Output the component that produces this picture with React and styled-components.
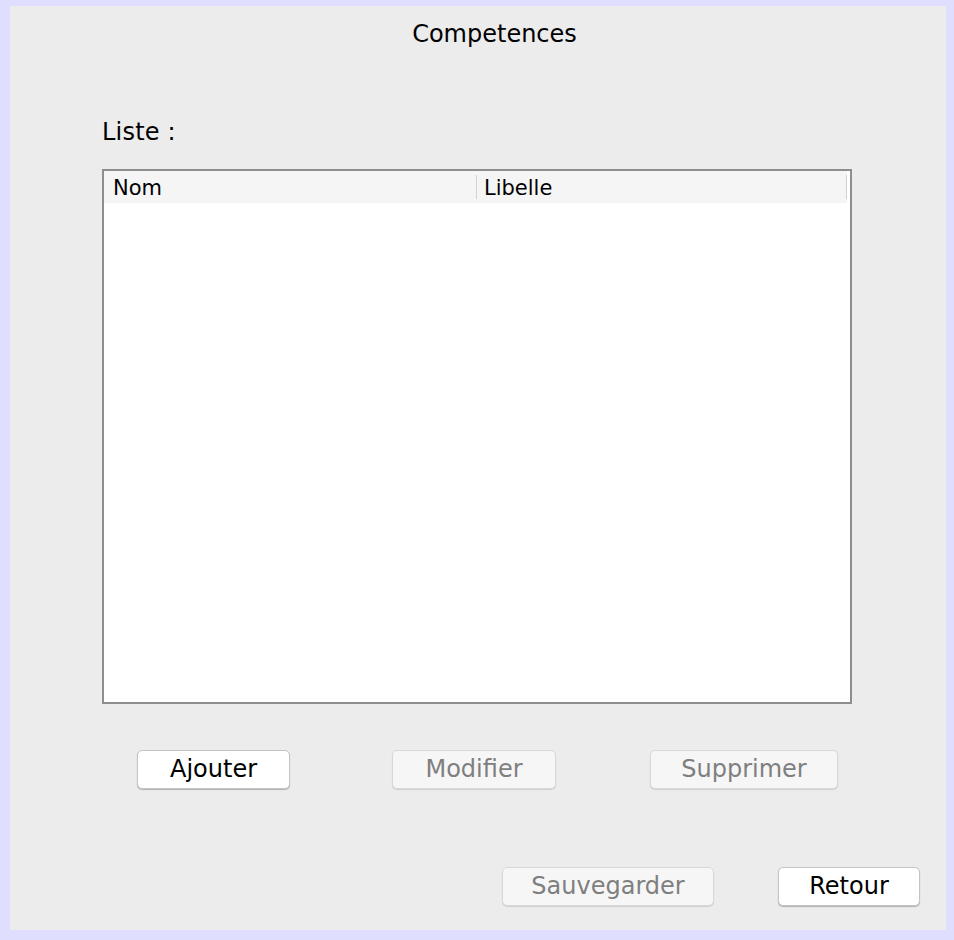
import React from 'react'
import styled, { createGlobalStyle } from 'styled-components'

const GlobalStyle = createGlobalStyle`
  body {
    margin: 0;
    background: #dfdefe;
    font-family: "DejaVu Sans", "Liberation Sans", sans-serif;
  }
`

const Frame = styled.div`
  width: 954px;
  height: 940px;
  box-sizing: border-box;
  padding: 6px 8px 10px 10px;
  background: #dfdefe;
`

const Panel = styled.div`
  height: 100%;
  background: #ececec;
  display: flex;
  flex-direction: column;
  color: #000;
`

const Title = styled.h1`
  margin: 14px 0 0 33px;
  font-size: 24px;
  font-weight: normal;
  line-height: 28px;
  text-align: center;
`

const Content = styled.div`
  padding-left: 92px;
`

const Label = styled.div`
  margin-top: 70px;
  font-size: 24px;
  line-height: 28px;
  letter-spacing: 0.2px;
`

const Table = styled.div`
  margin-top: 23px;
  width: 750px;
  height: 535px;
  box-sizing: border-box;
  border: 2px solid #8e8e8e;
  background: #fff;
  padding-right: 3px;
`

const HeaderRow = styled.div`
  display: grid;
  grid-template-columns: 373px 1fr;
  height: 32px;
  background: #f5f5f5;
`

const HeaderCell = styled.div`
  position: relative;
  padding: 3px 0 0 ${p => p.$pad}px;
  font-size: 21px;
  line-height: 28px;
  &::after {
    content: '';
    position: absolute;
    right: 0;
    top: 4px;
    bottom: 4px;
    width: 1px;
    background: #d2d2d2;
  }
`

const ButtonRow = styled.div`
  display: flex;
  margin-top: 46px;
  padding-left: 127px;
`

const BottomRow = styled.div`
  display: flex;
  justify-content: flex-end;
  gap: 64px;
  margin-top: 78px;
  padding-right: 26px;
`

const Button = styled.button`
  width: ${p => p.$width}px;
  height: 39px;
  margin-left: ${p => p.$gap || 0}px;
  padding: 0;
  box-sizing: border-box;
  border: 1px solid ${p => (p.disabled ? '#d8d8d8' : '#c4c4c4')};
  border-radius: 5px;
  background: ${p => (p.disabled ? '#f6f6f6' : '#fff')};
  color: ${p => (p.disabled ? '#7f7f7f' : '#000')};
  box-shadow: 0 1px 1px rgba(0, 0, 0, ${p => (p.disabled ? 0.12 : 0.25)});
  font-family: "DejaVu Sans", "Liberation Sans", sans-serif;
  font-size: 24px;
  line-height: 37px;
`

export default function App() {
  return (
    <>
      <GlobalStyle />
      <Frame>
        <Panel>
          <Title>Competences</Title>
          <Content>
            <Label>Liste :</Label>
            <Table>
              <HeaderRow>
                <HeaderCell $pad={9}>Nom</HeaderCell>
                <HeaderCell $pad={7}>Libelle</HeaderCell>
              </HeaderRow>
            </Table>
          </Content>
          <ButtonRow>
            <Button $width={153}>Ajouter</Button>
            <Button $width={164} $gap={102} disabled>Modifier</Button>
            <Button $width={188} $gap={94} disabled>Supprimer</Button>
          </ButtonRow>
          <BottomRow>
            <Button $width={212} disabled>Sauvegarder</Button>
            <Button $width={142}>Retour</Button>
          </BottomRow>
        </Panel>
      </Frame>
    </>
  )
}
